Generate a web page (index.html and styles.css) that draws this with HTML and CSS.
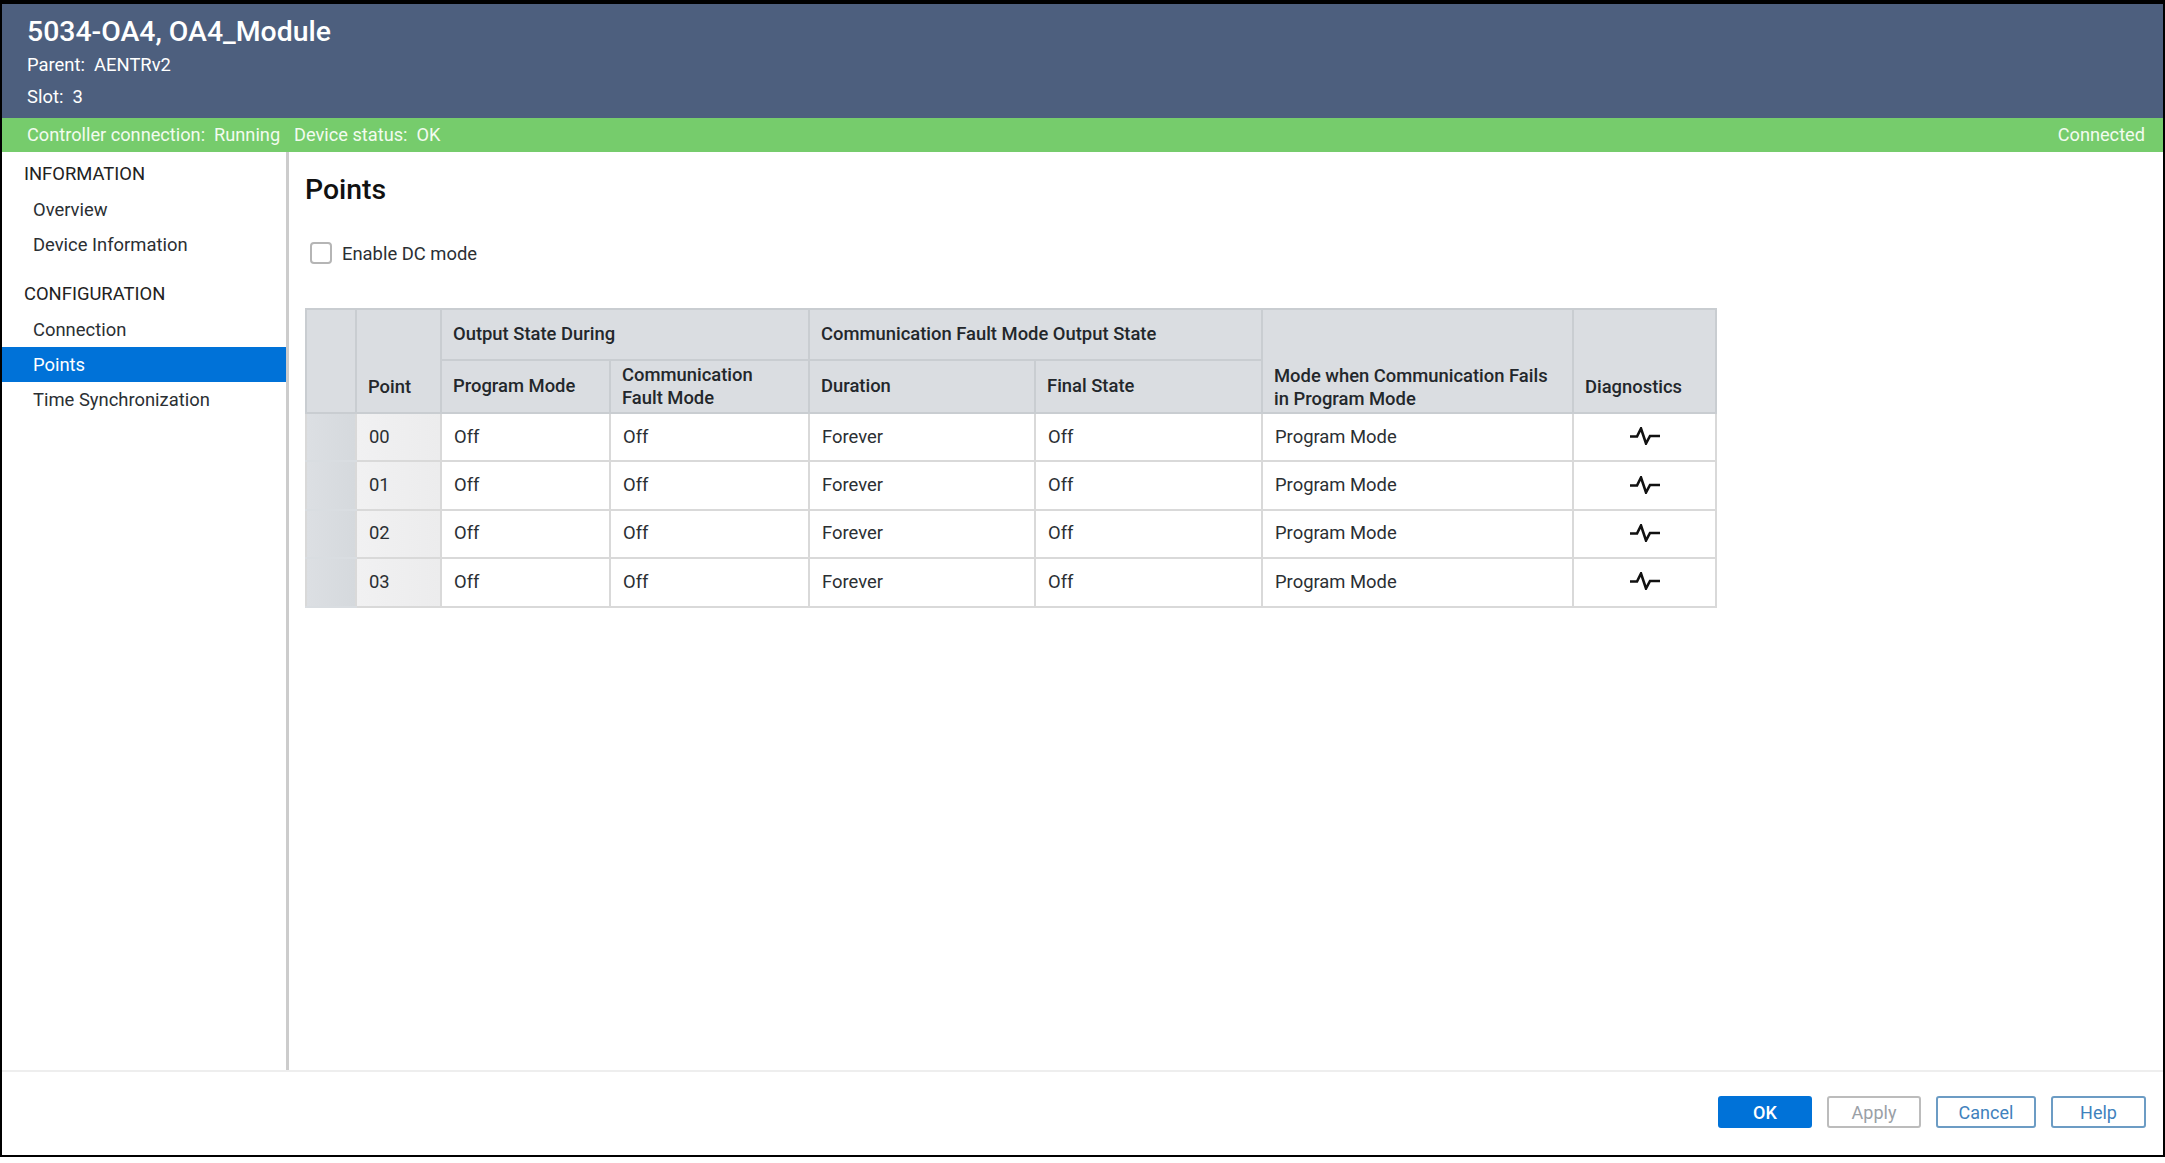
FILE: index.html
```html
<!DOCTYPE html>
<html lang="en">
<head>
  <meta charset="UTF-8" />
  <title>5034-OA4, OA4_Module</title>
  <link rel="stylesheet" href="styles.css">
</head>
<body>
  <div class="frame">
    <header class="top-bar">
      <h1>5034-OA4, OA4_Module</h1>
      <p>Parent:&nbsp; AENTRv2</p>
      <p>Slot:&nbsp; 3</p>
    </header>

    <div class="status-bar">
      <div class="status-left">
        <span>Controller connection:&nbsp; Running</span>
        <span>Device status:&nbsp; OK</span>
      </div>
      <span>Connected</span>
    </div>

    <div class="main">
      <nav class="sidebar">
        <div class="nav-head">INFORMATION</div>
        <a class="nav-item">Overview</a>
        <a class="nav-item">Device Information</a>
        <div class="nav-head nav-head-gap">CONFIGURATION</div>
        <a class="nav-item">Connection</a>
        <a class="nav-item active">Points</a>
        <a class="nav-item">Time Synchronization</a>
      </nav>

      <section class="content">
        <h2>Points</h2>
        <label class="check-row"><span class="check-box"></span>Enable DC mode</label>

        <table class="points">
          <colgroup>
            <col class="c-handle"><col class="c-point"><col class="c-program"><col class="c-fault">
            <col class="c-duration"><col class="c-final"><col class="c-mode"><col class="c-diag">
          </colgroup>
          <thead>
            <tr class="head-1">
              <th rowspan="2"></th>
              <th rowspan="2" class="single-line">Point</th>
              <th colspan="2">Output State During</th>
              <th colspan="2">Communication Fault Mode Output State</th>
              <th rowspan="2">Mode when Communication Fails<br>in Program Mode</th>
              <th rowspan="2" class="single-line">Diagnostics</th>
            </tr>
            <tr class="head-2">
              <th>Program Mode</th>
              <th>Communication<br>Fault Mode</th>
              <th>Duration</th>
              <th>Final State</th>
            </tr>
          </thead>
          <tbody id="pointRows"></tbody>
        </table>
      </section>
    </div>

    <footer class="footer">
      <button class="btn primary">OK</button>
      <button class="btn disabled">Apply</button>
      <button class="btn wide">Cancel</button>
      <button class="btn help">Help</button>
    </footer>
  </div>

  <script>
    const points = ["00", "01", "02", "03"];
    const pointRows = document.getElementById("pointRows");

    points.forEach(p => {
      const row = document.createElement("tr");
      row.innerHTML = `
        <td class="handle"></td>
        <td class="point">${p}</td>
        <td>Off</td>
        <td>Off</td>
        <td>Forever</td>
        <td>Off</td>
        <td>Program Mode</td>
        <td class="diag">
          <svg width="30" height="18" viewBox="0 0 30 18"><path d="M0 9.5H7L11 1.5L16 16.5L20 9H30" fill="none" stroke="#111" stroke-width="2.6"/></svg>
        </td>
      `;
      pointRows.appendChild(row);
    });
  </script>
</body>
</html>
```

FILE: styles.css
```css
:root {
  --header-bg: #4d5f7e;
  --green: #76cc6c;
  --blue: #0072d8;
  --cell-head: #dadde1;
  --line: #c9cdd1;
  --cell-line: #d9d9d9;
  --text: #2b2f33;
}

* {
  box-sizing: border-box;
}

body {
  margin: 0;
  background: #fff;
  font-family: Roboto, 'Liberation Sans', sans-serif;
  font-size: 18.4px;
  color: var(--text);
}

.frame {
  height: 1157px;
  width: 2165px;
  display: flex;
  flex-direction: column;
  border: solid #000;
  border-width: 4px 2px 2px 2px;
}

.top-bar {
  height: 114px;
  padding: 11px 25px 0;
  background: var(--header-bg);
  color: #fff;
}

.top-bar h1 {
  margin: 0 0 5px;
  font-size: 28.4px;
  line-height: 34px;
  font-weight: 500;
}

.top-bar p {
  margin: 0 0 10px;
  line-height: 22px;
}

.status-bar {
  height: 34px;
  padding: 0 18px 2px 25px;
  display: flex;
  justify-content: space-between;
  align-items: center;
  background: var(--green);
  font-size: 18.2px;
  color: #f2fbef;
}

.status-left {
  display: flex;
  gap: 14px;
}

.main {
  flex: 1;
  display: flex;
  min-height: 0;
  border-bottom: 2px solid #eee;
}

.sidebar {
  width: 287px;
  padding-top: 4px;
  border-right: 3px solid #ccc;
}

.nav-head {
  height: 36px;
  padding-left: 22px;
  line-height: 35px;
  color: #222;
}

.nav-head-gap {
  margin-top: 14px;
}

.nav-item {
  display: block;
  height: 35px;
  padding-left: 31px;
  line-height: 35px;
}

.nav-item.active {
  background: var(--blue);
  color: #fff;
}

.content {
  flex: 1;
  padding: 21px 0 0 16px;
}

.content h2 {
  margin: 0;
  font-size: 28.4px;
  line-height: 34px;
  font-weight: 500;
  color: #111;
}

.check-row {
  display: flex;
  align-items: center;
  gap: 10px;
  margin: 34px 0 0 5px;
  height: 24px;
}

.check-box {
  width: 22px;
  height: 22px;
  border: 2px solid #b5b5b5;
  border-radius: 4px;
}

.points {
  margin-top: 43px;
  width: 1410px;
  table-layout: fixed;
  border-collapse: collapse;
  border: 2px solid var(--line);
}

.c-handle { width: 50px; }
.c-point { width: 85px; }
.c-program { width: 169px; }
.c-fault { width: 199px; }
.c-duration { width: 226px; }
.c-final { width: 227px; }
.c-mode { width: 311px; }
.c-diag { width: 143px; }

.points th {
  padding: 0 11px 2px;
  background: var(--cell-head);
  border: 2px solid var(--line);
  text-align: left;
  vertical-align: bottom;
  font-weight: 500;
  line-height: 22.5px;
  color: #23272b;
}

.points th.single-line {
  padding-bottom: 14px;
}

.head-1 th[colspan] {
  vertical-align: middle;
  padding-bottom: 0;
}

.head-1 {
  height: 51px;
}

.head-2 {
  height: 53px;
}

.head-2 th {
  vertical-align: middle;
  padding-bottom: 0;
}

.points tbody tr {
  height: 48.4px;
}

.points td {
  padding: 0 12px 2px;
  border: 2px solid var(--cell-line);
}

.points td.handle {
  background: linear-gradient(90deg, #dcdfe3, #d5d9dd);
  border-top-color: #d9dde1;
  border-bottom-color: #d9dde1;
}

.points td.point {
  background: linear-gradient(90deg, #f1f1f2, #ececed);
}

.points td.diag {
  padding: 2px 0 0;
  text-align: center;
}

.footer {
  height: 83px;
  padding: 24px 17px 0 0;
  display: flex;
  justify-content: flex-end;
  gap: 15px;
}

.btn {
  width: 94px;
  height: 32px;
  padding: 0;
  background: #fff;
  border: 2px solid #6c9cc4;
  border-radius: 3px;
  font-family: inherit;
  font-size: 18px;
  color: #3f82bd;
}

.btn.wide {
  width: 100px;
}

.btn.help {
  width: 95px;
}

.btn.primary {
  background: var(--blue);
  border-color: var(--blue);
  color: #fff;
  font-weight: 500;
}

.btn.disabled {
  border-color: #bcbcbc;
  color: #9aa0a6;
}
```
